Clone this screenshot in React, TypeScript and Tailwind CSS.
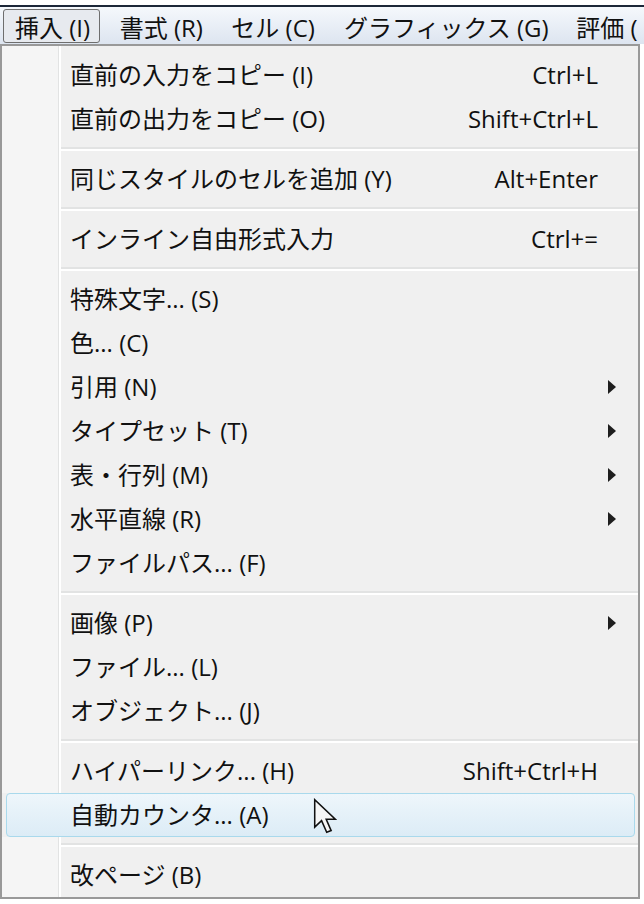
import React from "react";

type Row =
  | { kind: "sep" }
  | { kind: "item"; label: string; shortcut?: string; sub?: boolean; active?: boolean };

const rows: Row[] = [
  { kind: "item", label: "直前の入力をコピー (I)", shortcut: "Ctrl+L" },
  { kind: "item", label: "直前の出力をコピー (O)", shortcut: "Shift+Ctrl+L" },
  { kind: "sep" },
  { kind: "item", label: "同じスタイルのセルを追加 (Y)", shortcut: "Alt+Enter" },
  { kind: "sep" },
  { kind: "item", label: "インライン自由形式入力", shortcut: "Ctrl+=" },
  { kind: "sep" },
  { kind: "item", label: "特殊文字... (S)" },
  { kind: "item", label: "色... (C)" },
  { kind: "item", label: "引用 (N)", sub: true },
  { kind: "item", label: "タイプセット (T)", sub: true },
  { kind: "item", label: "表・行列 (M)", sub: true },
  { kind: "item", label: "水平直線 (R)", sub: true },
  { kind: "item", label: "ファイルパス... (F)" },
  { kind: "sep" },
  { kind: "item", label: "画像 (P)", sub: true },
  { kind: "item", label: "ファイル... (L)" },
  { kind: "item", label: "オブジェクト... (J)" },
  { kind: "sep" },
  { kind: "item", label: "ハイパーリンク... (H)", shortcut: "Shift+Ctrl+H" },
  { kind: "item", label: "自動カウンタ... (A)", active: true },
  { kind: "sep" },
  { kind: "item", label: "改ページ (B)" },
];

const menus = [
  { label: "書式 (R)", w: "w-[112px]" },
  { label: "セル (C)", w: "w-[113px]" },
  { label: "グラフィックス (G)", w: "w-[233px]" },
  { label: "評価 (", w: "w-[80px]" },
];

function Arrow() {
  return (
    <svg width="8" height="14" viewBox="0 0 8 14">
      <polygon points="0,0 8,7 0,14" fill="#1e1e1e" />
    </svg>
  );
}

function ItemRow({ row }: { row: Extract<Row, { kind: "item" }> }) {
  const content = (
    <>
      <span className="flex-1 whitespace-nowrap pb-[1px]">{row.label}</span>
      <span className="whitespace-nowrap pb-[1px]">{row.shortcut}</span>
      <span className="w-[40px] flex items-center pl-[10px]">{row.sub && <Arrow />}</span>
    </>
  );

  if (row.active) {
    return (
      <div className="relative h-[44px] flex px-[4px]">
        <div className="flex-1 flex items-center rounded-[4px] border border-[#a9d9ec] bg-gradient-to-b from-[#eef6fb] to-[#dcecf6] pl-[63px] -mr-[1px]">
          {content}
        </div>
        {/* mouse cursor */}
        <svg
          className="absolute left-[311px] top-[5px]"
          width="24"
          height="36"
          viewBox="0 0 14 21"
        >
          <polygon
            points="1,1 1,17 5,13.2 8,20 10.6,19 7.7,12.4 13,12.4"
            fill="#f6f6f6"
            stroke="#111"
            strokeWidth="0.9"
          />
        </svg>
      </div>
    );
  }

  return (
    <div className="h-[44px] flex">
      <div className="w-[56px] bg-[#f5f5f5]" />
      <div className="w-px bg-[#e2e3e3]" />
      <div className="w-[2px] bg-white" />
      <div className="flex-1 flex items-center pl-[9px]">{content}</div>
    </div>
  );
}

function Separator() {
  return (
    <div className="h-[16px] flex">
      <div className="w-[56px] bg-[#f5f5f5]" />
      <div className="w-px bg-[#e2e3e3]" />
      <div className="w-[2px] bg-white" />
      <div className="flex-1 flex flex-col justify-center">
        <div className="h-[2px] bg-[#e2e3e3]" />
        <div className="h-[2px] bg-white" />
      </div>
    </div>
  );
}

export default function App() {
  return (
    <div
      className="w-[644px] h-[904px] bg-white text-[24px] text-[#111] overflow-hidden"
      style={{ fontFamily: '"Open Sans", "Noto Sans CJK JP", sans-serif' }}
    >
      <div className="h-[5px] bg-white" />
      <div className="h-[2px] bg-[#1c2738]" />
      {/* menu bar */}
      <div className="h-[37px] bg-gradient-to-b from-[#f5f8fc] to-[#dde5f0] flex items-end pl-[3px] pb-[1px]">
        <div className="w-[97px] h-[34px] flex items-center pl-[11px] pt-[4px] whitespace-nowrap leading-none border border-[#6e6e6e] rounded-[3px] bg-[#e7eaef]">
          挿入 (I)
        </div>
        <div className="w-[8px]" />
        {menus.map((m) => (
          <div
            key={m.label}
            className={`${m.w} h-[34px] flex items-center pl-[12px] pt-[4px] whitespace-nowrap leading-none`}
          >
            {m.label}
          </div>
        ))}
      </div>
      {/* dropdown */}
      <div className="w-[640px] border-2 border-[#999999] bg-[#f0f0f0] leading-none">
        <div className="h-[7px] flex">
          <div className="w-[56px] bg-[#f5f5f5]" />
          <div className="w-px bg-[#e2e3e3]" />
          <div className="w-[2px] bg-white" />
        </div>
        {rows.map((r, i) =>
          r.kind === "sep" ? <Separator key={i} /> : <ItemRow key={i} row={r} />
        )}
      </div>
    </div>
  );
}
